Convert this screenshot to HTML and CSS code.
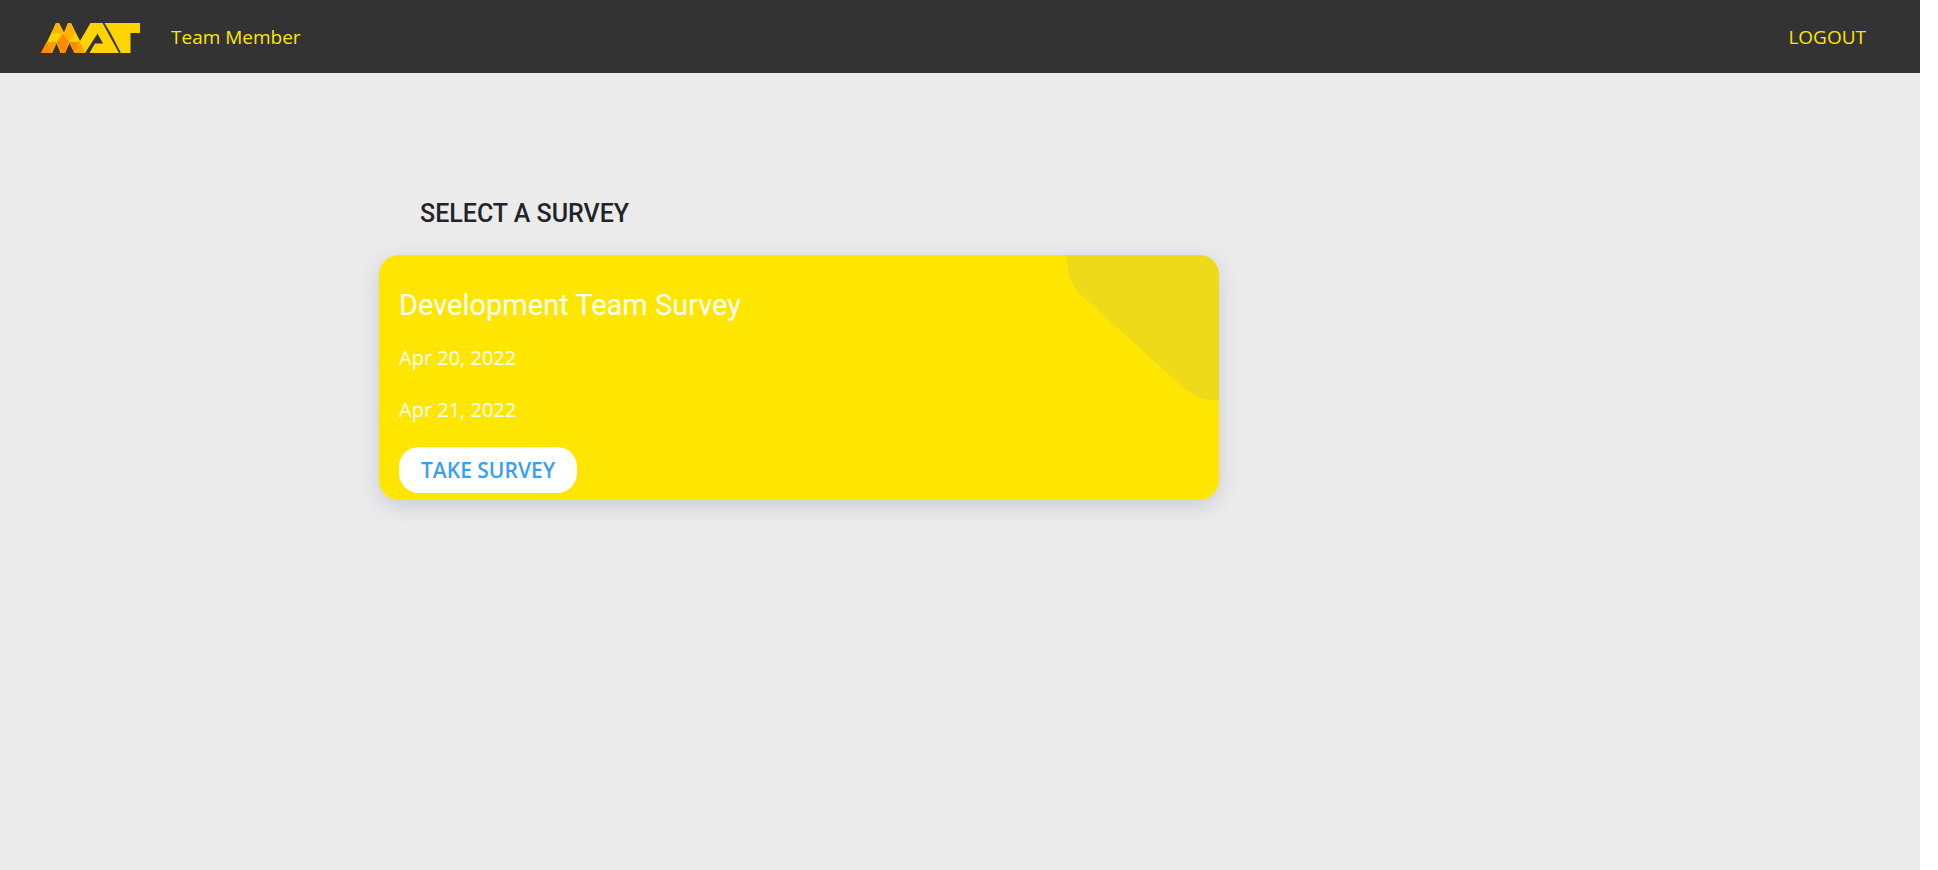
FILE: index.html
```html
<!DOCTYPE html>
<html lang="en">
<head>
<meta charset="utf-8">
<title>Team Member</title>
<link rel="stylesheet" href="styles.css">
</head>
<body>
<div class="page">
  <header class="navbar">
    <a class="brand" href="#" aria-label="MAT home">
      <svg class="logo" viewBox="0 0 100 32" aria-hidden="true">
        <path fill="#ffd400" d="M15 2H18L23 11.500 27 2H30L39 20 49.500 2H61.500L78 32H48.500L54 22.500H62L56.500 12.500 44 32H33.500L28.500 22 24 32H19.500L15.500 22 11 32H0L5.500 22Z"/>
        <path fill="#ffd400" d="M63.500 2H99V12H89.500V32H79.500V12H69.500ZM69.500 12H79.500V31Z"/>
        <path fill="#ffb300" d="M15 2H18L22 12H10.500ZM27 2H30L34 12 28 21 23 12Z"/>
        <path fill="#ff8c00" d="M0 32 5.500 21 11 32ZM16 21 22 12 28 21 24 32H19.500ZM28 21H39L33.500 32Z"/>
        <path fill="#ffa000" d="M5.500 21H16L11 32ZM39 21 44 32H33.500Z"/>
      </svg>
    </a>
    <a class="nav-link" href="#">Team Member</a>
    <button class="nav-link logout" type="button">LOGOUT</button>
  </header>
  <main class="content">
    <h1 class="heading">SELECT A SURVEY</h1>
    <article class="card">
      <svg class="corner" viewBox="0 0 152 146" aria-hidden="true">
        <path fill="#eeda18" d="M0 0V9Q1 28 16 42L118 134Q132 146 152 146V0Z"/>
      </svg>
      <h2 class="card-title">Development Team Survey</h2>
      <p class="date">Apr 20, 2022</p>
      <p class="date">Apr 21, 2022</p>
      <button class="take" type="button">TAKE SURVEY</button>
    </article>
  </main>
</div>
</body>
</html>
```
FILE: styles.css
```css
* { box-sizing: border-box; }
html { background: #fff; }
body {
  margin: 0;
  padding-right: 18px;
  font-family: "Open Sans", "Noto Sans", sans-serif;
  font-size: 20px;
  line-height: 30px;
}
.page { min-height: 100vh; background: #ebebeb; }
.navbar {
  display: flex;
  align-items: center;
  height: 73px;
  padding: 0 54px 0 41px;
  background: #333;
}
.brand { margin-right: 30px; }
.logo { display: block; width: 100px; height: 32px; }
.nav-link {
  padding: 0;
  border: 0;
  background: none;
  color: #ffe600;
  font: inherit;
  font-size: 19px;
  text-decoration: none;
  cursor: pointer;
}
.logout { margin-left: auto; }
.content { width: 840px; margin: 0 0 0 379px; padding-top: 126px; }
.heading {
  margin: 0 0 26px;
  padding-left: 41px;
  color: #212529;
  font: 500 25px/30px Roboto, sans-serif;
}
.card {
  position: relative;
  overflow: hidden;
  padding: 32px 20px 7px;
  border-radius: 20px;
  background: #ffe600;
  color: #fff;
  box-shadow: 0 6px 20px rgba(40, 50, 110, .16);
}
.corner { position: absolute; top: 0; right: 0; width: 152px; height: 146px; }
.card-title { margin: 0 0 20px; font: 400 29px/36px Roboto, sans-serif; }
.date { margin: 0 0 22px; }
.take {
  display: block;
  height: 46px;
  padding: 0 22px;
  border: 0;
  border-radius: 20px;
  background: #fff;
  color: #3b9ff0;
  font: 600 21px/30px "Open Sans", "Noto Sans", sans-serif;
  cursor: pointer;
}
```
